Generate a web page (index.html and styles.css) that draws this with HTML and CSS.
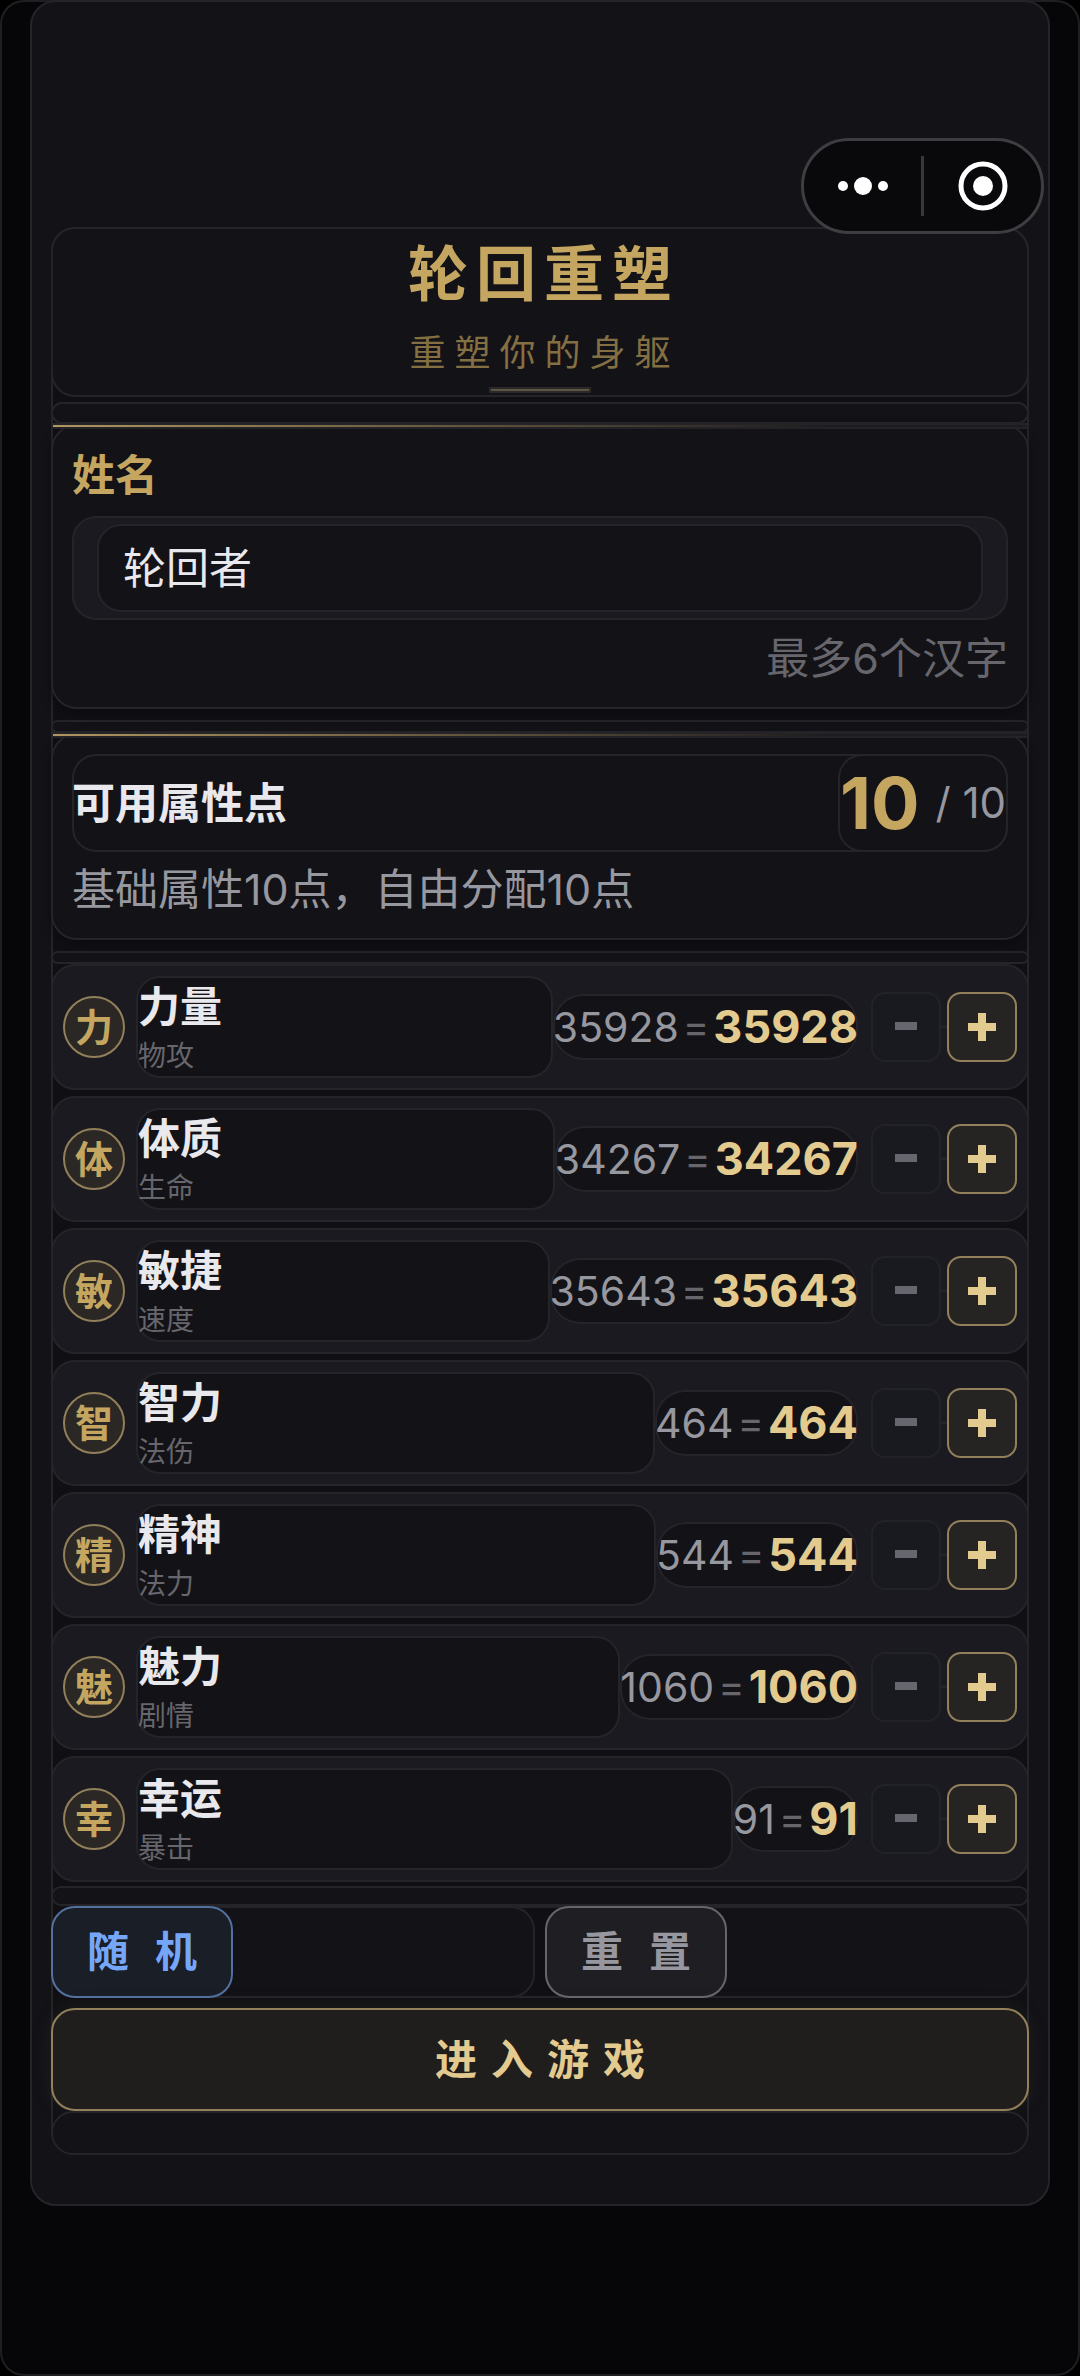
FILE: index.html
```html
<!DOCTYPE html>
<html lang="zh-CN">
<head>
  <meta charset="UTF-8">
  <meta name="viewport" content="width=device-width, initial-scale=1.0">
  <title>轮回重塑</title>
  <link rel="stylesheet" href="styles.css">
</head>
<body>
  <svg class="defs" aria-hidden="true">
    <symbol id="icon-minus" viewBox="0 0 28 28"><path d="M3 9h22v8H3z"/></symbol>
    <symbol id="icon-plus" viewBox="0 0 28 28"><path d="M10 0h8v10h10v8H18v10h-8V18H0v-8h10z"/></symbol>
  </svg>

  <div class="page">
    <!-- 右上角胶囊 -->
    <div class="capsule">
      <button type="button" aria-label="更多">
        <svg width="54" height="54" viewBox="0 0 54 54"><circle cx="7" cy="27" r="5"/><circle cx="27" cy="27" r="9"/><circle cx="47" cy="27" r="5"/></svg>
      </button>
      <span class="capsule-line"></span>
      <button type="button" aria-label="关闭">
        <svg width="54" height="54" viewBox="0 0 54 54"><circle cx="27" cy="27" r="22" fill="none" stroke="#fff" stroke-width="5"/><circle cx="27" cy="27" r="10"/></svg>
      </button>
    </div>

    <main class="panel">
      <div class="content">
        <header class="header">
          <h1>轮回重塑</h1>
          <p>重塑你的身躯</p>
          <div class="header-bar"></div>
        </header>

        <div class="spacer tall"></div>

        <section class="card">
          <label class="card-label" for="name">姓名</label>
          <div class="input-wrap">
            <input type="text" id="name" value="轮回者" maxlength="6">
          </div>
          <p class="hint right">最多6个汉字</p>
        </section>

        <div class="spacer"></div>

        <section class="card">
          <div class="points">
            <h2>可用属性点</h2>
            <div class="points-value"><strong>10</strong><span>/ 10</span></div>
          </div>
          <p class="hint">基础属性10点，自由分配10点</p>
        </section>

        <div class="spacer"></div>

        <div class="stats">
          <div class="stat">
            <span class="badge">力</span>
            <div class="info"><b>力量</b><small>物攻</small></div>
            <div class="value"><span>35928</span><i>=</i><strong>35928</strong></div>
            <div class="ops">
              <button type="button" class="minus" aria-label="减少力量" disabled><svg><use href="#icon-minus"/></svg></button>
              <button type="button" class="plus" aria-label="增加力量"><svg><use href="#icon-plus"/></svg></button>
            </div>
          </div>
          <div class="stat">
            <span class="badge">体</span>
            <div class="info"><b>体质</b><small>生命</small></div>
            <div class="value"><span>34267</span><i>=</i><strong>34267</strong></div>
            <div class="ops">
              <button type="button" class="minus" aria-label="减少体质" disabled><svg><use href="#icon-minus"/></svg></button>
              <button type="button" class="plus" aria-label="增加体质"><svg><use href="#icon-plus"/></svg></button>
            </div>
          </div>
          <div class="stat">
            <span class="badge">敏</span>
            <div class="info"><b>敏捷</b><small>速度</small></div>
            <div class="value"><span>35643</span><i>=</i><strong>35643</strong></div>
            <div class="ops">
              <button type="button" class="minus" aria-label="减少敏捷" disabled><svg><use href="#icon-minus"/></svg></button>
              <button type="button" class="plus" aria-label="增加敏捷"><svg><use href="#icon-plus"/></svg></button>
            </div>
          </div>
          <div class="stat">
            <span class="badge">智</span>
            <div class="info"><b>智力</b><small>法伤</small></div>
            <div class="value"><span>464</span><i>=</i><strong>464</strong></div>
            <div class="ops">
              <button type="button" class="minus" aria-label="减少智力" disabled><svg><use href="#icon-minus"/></svg></button>
              <button type="button" class="plus" aria-label="增加智力"><svg><use href="#icon-plus"/></svg></button>
            </div>
          </div>
          <div class="stat">
            <span class="badge">精</span>
            <div class="info"><b>精神</b><small>法力</small></div>
            <div class="value"><span>544</span><i>=</i><strong>544</strong></div>
            <div class="ops">
              <button type="button" class="minus" aria-label="减少精神" disabled><svg><use href="#icon-minus"/></svg></button>
              <button type="button" class="plus" aria-label="增加精神"><svg><use href="#icon-plus"/></svg></button>
            </div>
          </div>
          <div class="stat">
            <span class="badge">魅</span>
            <div class="info"><b>魅力</b><small>剧情</small></div>
            <div class="value"><span>1060</span><i>=</i><strong>1060</strong></div>
            <div class="ops">
              <button type="button" class="minus" aria-label="减少魅力" disabled><svg><use href="#icon-minus"/></svg></button>
              <button type="button" class="plus" aria-label="增加魅力"><svg><use href="#icon-plus"/></svg></button>
            </div>
          </div>
          <div class="stat">
            <span class="badge">幸</span>
            <div class="info"><b>幸运</b><small>暴击</small></div>
            <div class="value"><span>91</span><i>=</i><strong>91</strong></div>
            <div class="ops">
              <button type="button" class="minus" aria-label="减少幸运" disabled><svg><use href="#icon-minus"/></svg></button>
              <button type="button" class="plus" aria-label="增加幸运"><svg><use href="#icon-plus"/></svg></button>
            </div>
          </div>
        </div>

        <div class="spacer medium"></div>

        <div class="actions">
          <div class="cell"><button type="button" class="btn random">随 机</button></div>
          <div class="cell"><button type="button" class="btn reset">重 置</button></div>
        </div>
        <button type="button" class="btn enter">进入游戏</button>
        <div class="footer"></div>
      </div>
    </main>
  </div>
</body>
</html>
```

FILE: styles.css
```css
*, *::before {
  box-sizing: border-box;
}
body {
  margin: 0;
  background: #000;
  color: #e8e8ed;
  font-family: Inter, "Noto Sans CJK SC", sans-serif;
  font-size: 43px;
  line-height: 54px;
}
h1, h2, p {
  margin: 0;
}
button {
  font-family: inherit;
  font-size: inherit;
  line-height: inherit;
  padding: 0;
  margin: 0;
  border: none;
  background: none;
}
.defs {
  display: none;
}
.page {
  position: relative;
  min-height: 100vh;
  padding: 0 30px;
  background: #060608;
  border-radius: 24px;
  box-shadow: inset 0 0 0 2px #1f1f23;
}
.panel {
  background: #121217;
  border: 2px solid #242429;
  border-radius: 26px;
  padding: 225px 19px 49px;
}
.content {
  display: flex;
  flex-direction: column;
  background: #101014;
  border-radius: 24px;
  box-shadow: inset 0 0 0 2px #242429;
}

/* 胶囊 */
.capsule {
  position: absolute;
  top: 138px;
  right: 36px;
  width: 243px;
  height: 96px;
  display: flex;
  align-items: center;
  background: #09090b;
  border: 3px solid #3e3e42;
  border-radius: 48px;
}
.capsule button {
  flex: 1;
  display: flex;
  justify-content: center;
}
.capsule svg {
  fill: #fff;
}
.capsule-line {
  width: 3px;
  height: 60px;
  background: #38383c;
}

/* 标题 */
.header {
  background: #121217;
  border: 2px solid #242429;
  border-radius: 24px;
  padding: 9px 0 2px;
  margin-bottom: 5px;
  text-align: center;
}
.header h1 {
  color: #c4a661;
  font-size: 60px;
  line-height: 72px;
  letter-spacing: 8px;
  text-indent: 8px;
}
.header p {
  color: #846f43;
  font-size: 36px;
  letter-spacing: 9px;
  text-indent: 9px;
  margin-top: 16px;
}
.header-bar {
  width: 102px;
  height: 6px;
  margin: 7px auto 0;
  background: #5c5445;
  border: 2px solid #2b2927;
}
.spacer {
  height: 13px;
  background: #121217;
  border: 2px solid #242429;
  border-radius: 11px;
}
.spacer.medium {
  height: 20px;
}
.spacer.tall {
  height: 22px;
}

/* 卡片 */
.card {
  position: relative;
  background: #121217;
  border: 2px solid #242429;
  border-radius: 26px;
  padding: 19px 19px 22px;
  margin-bottom: 11px;
  box-shadow: 0 4px 12px rgba(0, 0, 0, 0.3);
}
.card::before {
  content: "";
  position: absolute;
  top: -3px;
  left: 0;
  right: 0;
  height: 6px;
  background: linear-gradient(90deg, #b0965f, #1c1b1e 80%) padding-box no-repeat, #1c1b1e;
  border: solid #242327;
  border-width: 2px 0;
}
.card-label {
  display: block;
  color: #c4a661;
  font-weight: bold;
  line-height: 60px;
}
.input-wrap {
  margin-top: 11px;
  padding: 6px 23px;
  background: #1a1a20;
  border: 2px solid #242429;
  border-radius: 24px;
}
.input-wrap input {
  display: block;
  width: 100%;
  height: 88px;
  padding: 0 24px 6px;
  color: #e8e8ed;
  font-family: inherit;
  font-size: inherit;
  line-height: inherit;
  background: #121217;
  border: 2px solid #242429;
  border-radius: 24px;
  outline: none;
}
.hint {
  margin-top: 10px;
  color: #97979f;
}
.hint.right {
  margin-top: 11px;
  text-align: right;
  color: #66666c;
}
.points {
  display: flex;
  align-items: center;
  justify-content: space-between;
  height: 98px;
  border-radius: 24px;
  box-shadow: inset 0 0 0 2px #242429;
}
.points h2 {
  font-size: 43px;
}
.points-value {
  display: flex;
  align-items: center;
  gap: 16px;
  height: 98px;
  padding: 0 2px;
  border-radius: 24px;
  box-shadow: inset 0 0 0 2px #242429;
}
.points-value strong {
  color: #c4a661;
  font-size: 72px;
}
.points-value span {
  color: #97979f;
  font-size: 42px;
}

/* 属性列表 */
.stats {
  display: flex;
  flex-direction: column;
  gap: 6px;
  margin-bottom: 4px;
}
.stat {
  display: flex;
  align-items: center;
  padding: 10px;
  background: #1a1a20;
  border: 2px solid #242429;
  border-radius: 24px;
}
.badge {
  display: flex;
  align-items: center;
  justify-content: center;
  width: 62px;
  height: 62px;
  margin-right: 11px;
  color: #c4a661;
  font-size: 38px;
  font-weight: bold;
  background: #2a2724;
  border: 2px solid #92805a;
  border-radius: 50%;
}
.info {
  flex: 1;
  display: flex;
  flex-direction: column;
  background: #121217;
  border: 2px solid #242429;
  border-radius: 24px;
}
.info b {
  font-size: 42px;
  line-height: 58px;
}
.info small {
  color: #66666c;
  font-size: 28px;
  line-height: 40px;
}
.value {
  display: flex;
  align-items: center;
  height: 66px;
  margin-right: 13px;
  background: #121217;
  border-radius: 30px;
  box-shadow: inset 0 0 0 2px #242429;
}
.value span {
  color: #97979f;
  font-size: 41px;
}
.value i {
  margin: 0 4px;
  color: #66666c;
  font-size: 40px;
  font-style: normal;
}
.value strong {
  color: #e3cb90;
  font-size: 45px;
}
.ops {
  display: flex;
  align-items: center;
  gap: 6px;
  background: linear-gradient(#242429, #242429) center / 12px 2px no-repeat;
}
.ops button {
  display: flex;
  align-items: center;
  justify-content: center;
  width: 70px;
  height: 70px;
  border-radius: 14px;
}
.ops svg {
  width: 28px;
  height: 28px;
}
.ops .minus {
  background: #191920;
  border: 2px solid #222229;
}
.minus svg {
  fill: #66666e;
}
.ops .plus {
  background: #262423;
  border: 2px solid #92805a;
}
.plus svg {
  fill: #e3cb90;
}

/* 底部按钮 */
.actions {
  display: flex;
  gap: 10px;
  margin-bottom: 10px;
  border-radius: 24px;
  box-shadow: inset 0 0 0 2px #242429;
}
.cell {
  flex: 1;
  display: flex;
  background: #121217;
  border-radius: 24px;
  box-shadow: inset 0 0 0 2px #242429;
}
.btn {
  font-size: 42px;
  font-weight: bold;
  border-radius: 24px;
}
.random, .reset {
  height: 92px;
  padding: 0 26px 0 34px;
  letter-spacing: 8px;
}
.random {
  color: #76a6f8;
  background: #191e27;
  border: 2px solid #53709f;
}
.reset {
  color: #97979f;
  background: #1e1e23;
  border: 2px solid #66666c;
}
.enter {
  height: 103px;
  color: #e3cb90;
  letter-spacing: 14px;
  text-indent: 14px;
  background: #201e1d;
  border: 2px solid #92805a;
  box-shadow: 0 0 24px rgba(196, 166, 97, 0.08);
}
.footer {
  height: 44px;
  background: #121217;
  border: 2px solid #242429;
  border-radius: 24px;
}
```
